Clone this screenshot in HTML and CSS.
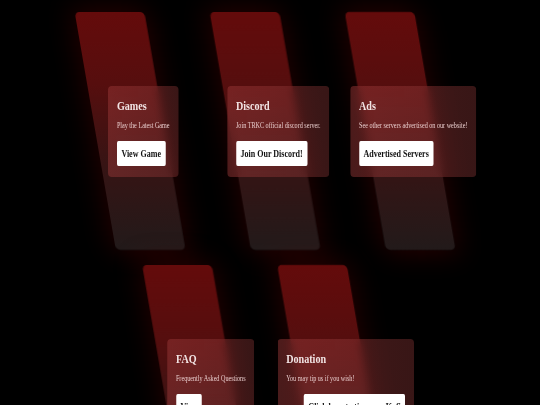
FILE: index.html
```html
<!DOCTYPE html>
<html lang="en">
<head>
<meta charset="utf-8">
<title>TRKC</title>
<link rel="stylesheet" href="styles.css">
</head>
<body>
<div class="page">
  <div class="grid">
    <div class="item">
      <div class="card">
        <h2 class="title">Games</h2>
        <p class="desc">Play the Latest Game</p>
        <div class="actions"><a class="btn" href="#">View Game</a></div>
      </div>
    </div>
    <div class="item">
      <div class="card">
        <h2 class="title">Discord</h2>
        <p class="desc">Join TRKC official discord server.</p>
        <div class="actions"><a class="btn" href="#">Join Our Discord!</a></div>
      </div>
    </div>
    <div class="item">
      <div class="card">
        <h2 class="title">Ads</h2>
        <p class="desc">See other servers advertised on our website!</p>
        <div class="actions"><a class="btn" href="#">Advertised Servers</a></div>
      </div>
    </div>
    <div class="item">
      <div class="card">
        <h2 class="title">FAQ</h2>
        <p class="desc">Frequently Asked Questions</p>
        <div class="actions"><a class="btn" href="#">View</a></div>
      </div>
    </div>
    <div class="item">
      <div class="card">
        <h2 class="title">Donation</h2>
        <p class="desc">You may tip us if you wish!</p>
        <div class="actions actions-offset"><a class="btn" href="#">Click here to tip us on Kofi</a></div>
      </div>
    </div>
  </div>
</div>
</body>
</html>
```
FILE: styles.css
```css
html, body {
  margin: 0;
  padding: 0;
  background: #000;
  overflow: hidden;
}

body {
  width: 540px;
  height: 405px;
}

.page {
  width: 720px;
  height: 405px;
  overflow: hidden;
  transform: scaleX(0.75);
  transform-origin: 0 0;
  font-family: "Liberation Serif", "Times New Roman", serif;
}

.grid {
  display: flex;
  flex-wrap: wrap;
  justify-content: center;
  column-gap: 20px;
  row-gap: 15px;
  width: 520px;
  margin-left: 111px;
  padding-top: 12px;
}

.item {
  position: relative;
  width: 160px;
  height: 238px;
  display: flex;
  flex-direction: column;
  align-items: center;
}

.item::before {
  content: "";
  position: absolute;
  left: 16px;
  top: 0;
  width: 93px;
  height: 238px;
  border-radius: 6px / 5px;
  background: linear-gradient(180deg, #640b0b 0%, #560e0e 30%, #361414 65%, #221a1a 100%);
  box-shadow: 0 0 32px 4px rgba(110, 0, 0, 0.33);
  filter: blur(0.6px);
  transform: skewX(13deg);
}

.card {
  position: relative;
  margin-top: 74px;
  padding: 12px 11.5px 11px;
  border-radius: 5px / 4px;
  background: linear-gradient(90deg, rgba(160, 60, 60, 0.45), rgba(140, 55, 55, 0.4));
  backdrop-filter: blur(6px);
}

.title {
  margin: 0;
  font-size: 13.5px;
  line-height: 16px;
  font-weight: bold;
  color: #f2e4e4;
}

.desc {
  margin: 7px 0 10px;
  font-size: 8.2px;
  line-height: 10px;
  color: #e8cccc;
  white-space: nowrap;
}

.actions {
  display: flex;
}

.actions-offset {
  padding-left: 23.6px;
}

.btn {
  display: block;
  height: 25px;
  line-height: 25px;
  padding: 0 6px;
  background: #fff;
  color: #111;
  font-size: 10.7px;
  font-weight: bold;
  border-radius: 2px;
  white-space: nowrap;
  text-decoration: none;
}
```
